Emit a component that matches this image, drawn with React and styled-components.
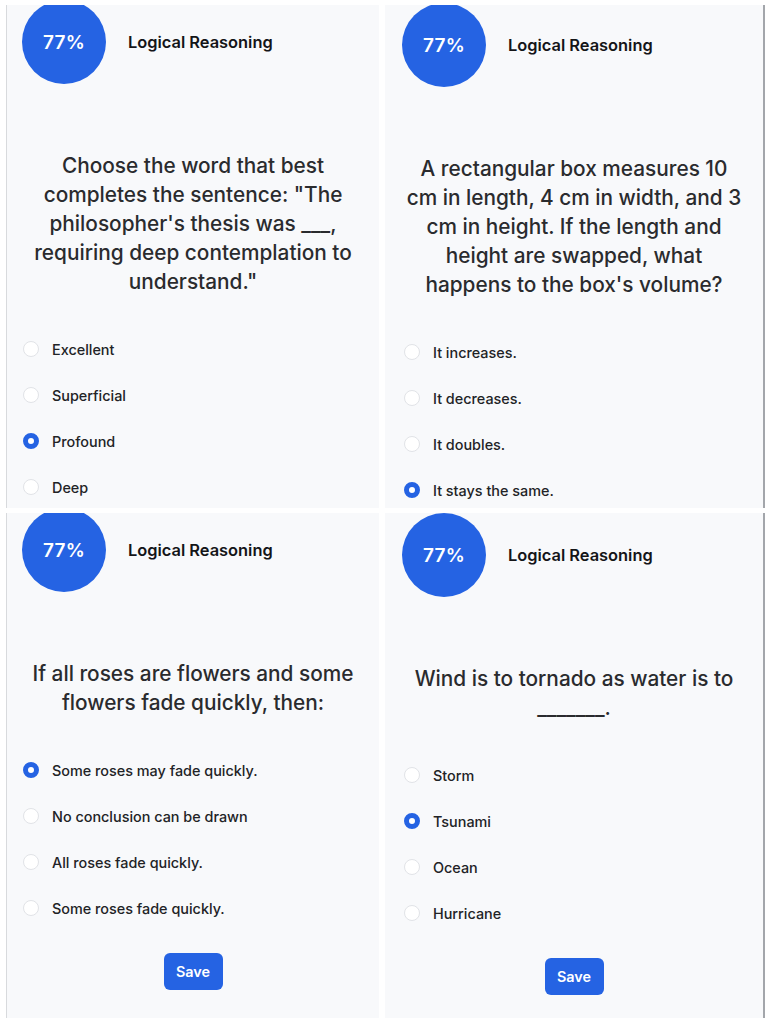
import React from 'react';
import styled, { createGlobalStyle } from 'styled-components';

const GlobalStyle = createGlobalStyle`
  html, body {
    margin: 0;
    padding: 0;
    background: #ffffff;
  }
  body {
    font-family: Inter, "Noto Sans", "Liberation Sans", sans-serif;
    -webkit-font-smoothing: antialiased;
  }
`;

const PANELS = [
  {
    id: 'tl',
    side: 'left',
    shift: -5,
    question:
      'Choose the word that best completes the sentence: "The philosopher\'s thesis was ___, requiring deep contemplation to understand."',
    options: ['Excellent', 'Superficial', 'Profound', 'Deep'],
    selected: 2
  },
  {
    id: 'tr',
    side: 'right',
    shift: -2,
    question:
      "A rectangular box measures 10 cm in length, 4 cm in width, and 3 cm in height. If the length and height are swapped, what happens to the box's volume?",
    options: ['It increases.', 'It decreases.', 'It doubles.', 'It stays the same.'],
    selected: 3
  },
  {
    id: 'bl',
    side: 'left',
    shift: -5,
    question: 'If all roses are flowers and some flowers fade quickly, then:',
    options: [
      'Some roses may fade quickly.',
      'No conclusion can be drawn',
      'All roses fade quickly.',
      'Some roses fade quickly.'
    ],
    selected: 0,
    save: true
  },
  {
    id: 'br',
    side: 'right',
    shift: 0,
    question: 'Wind is to tornado as water is to _______.',
    options: ['Storm', 'Tsunami', 'Ocean', 'Hurricane'],
    selected: 1,
    save: true
  }
];

function QuizPanel({ panel }) {
  return (
    <Panel $side={panel.side}>
      <Header $shift={panel.shift} $side={panel.side}>
        <Score>77%</Score>
        <Title>Logical Reasoning</Title>
      </Header>
      <Question>{panel.question}</Question>
      <Options $side={panel.side}>
        {panel.options.map((opt, i) => (
          <Option key={opt}>
            <Radio $checked={i === panel.selected} />
            <OptionLabel>{opt}</OptionLabel>
          </Option>
        ))}
      </Options>
      {panel.save && <SaveButton>Save</SaveButton>}
    </Panel>
  );
}

export default function App() {
  return (
    <>
      <GlobalStyle />
      <Collage>
        {PANELS.map((p) => (
          <QuizPanel key={p.id} panel={p} />
        ))}
      </Collage>
    </>
  );
}

const Collage = styled.div`
  display: grid;
  grid-template-columns: 373px 380px;
  grid-template-rows: 503px 505px;
  column-gap: 6px;
  row-gap: 5px;
  padding: 5px 0 6px 6px;
  width: 769px;
  height: 1024px;
  box-sizing: border-box;
`;

const Panel = styled.section`
  display: flex;
  flex-direction: column;
  background: #f8f9fb;
  overflow: hidden;
  box-sizing: border-box;
  border-left: ${({ $side }) => ($side === 'left' ? '1px solid #d8dadd' : 'none')};
  border-right: ${({ $side }) => ($side === 'right' ? '2px solid #a3a6ab' : 'none')};
`;

const Header = styled.div`
  display: flex;
  align-items: center;
  gap: 22px;
  margin-top: ${({ $shift }) => $shift}px;
  padding-left: ${({ $side }) => ($side === 'left' ? '15px' : '17px')};
`;

const Score = styled.div`
  width: 84px;
  height: 84px;
  border-radius: 50%;
  background: #2563e3;
  color: #ffffff;
  display: flex;
  align-items: center;
  justify-content: center;
  font-size: 19px;
  font-weight: 600;
  letter-spacing: 0.3px;
`;

const Title = styled.h2`
  margin: 0;
  font-size: 16.4px;
  font-weight: 600;
  color: #141518;
`;

const Question = styled.p`
  margin: 67px 0 0;
  padding: 0 20px;
  text-align: center;
  font-size: 20.8px;
  line-height: 29px;
  font-weight: 500;
  color: #2a2b2e;
`;

const Options = styled.ul`
  list-style: none;
  margin: 30px 0 0;
  padding: 0 0 0 ${({ $side }) => ($side === 'left' ? '16px' : '19px')};
`;

const Option = styled.li`
  display: flex;
  align-items: center;
  height: 46px;
`;

const Radio = styled.span`
  width: 16px;
  height: 16px;
  border-radius: 50%;
  box-sizing: border-box;
  flex-shrink: 0;
  background: #ffffff;
  border: ${({ $checked }) => ($checked ? '5px solid #2563e3' : '1px solid #e1e3e7')};
`;

const OptionLabel = styled.span`
  margin-left: 13px;
  font-size: 14.4px;
  font-weight: 500;
  color: #222326;
`;

const SaveButton = styled.button`
  align-self: center;
  margin-top: 22px;
  width: 59px;
  height: 37px;
  border: none;
  border-radius: 6px;
  background: #2563e3;
  color: #ffffff;
  font-family: inherit;
  font-size: 14.4px;
  font-weight: 600;
`;
